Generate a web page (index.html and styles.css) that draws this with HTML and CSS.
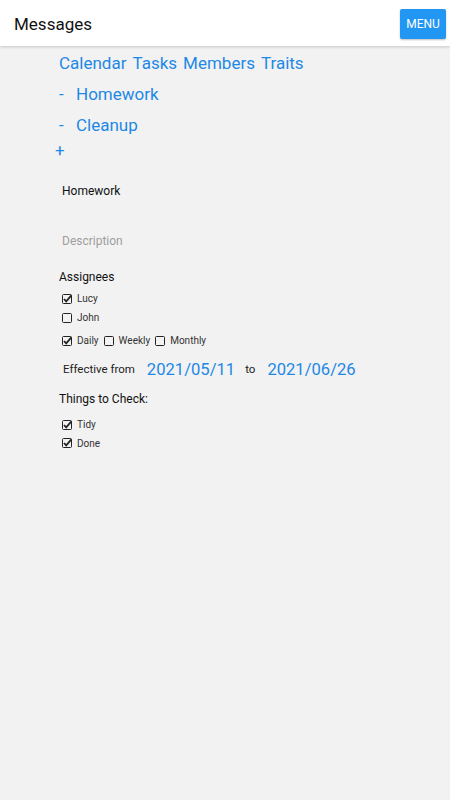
FILE: index.html
```html
<!DOCTYPE html>
<html lang="en">
<head>
    <meta charset="UTF-8">
    <meta name="viewport" content="width=device-width, initial-scale=1.0">
    <title>Messages</title>
    <link rel="stylesheet" href="styles.css">
</head>
<body>
    <header class="topbar">
        <span class="title">Messages</span>
        <button class="menu">MENU</button>
    </header>
    <main class="content">
        <ul class="tabs">
            <li><a href="#">Calendar</a></li>
            <li><a href="#">Tasks</a></li>
            <li><a href="#">Members</a></li>
            <li><a href="#">Traits</a></li>
        </ul>
        <ul class="tasklist">
            <li><span class="dash">-</span><a href="#">Homework</a></li>
            <li><span class="dash">-</span><a href="#">Cleanup</a></li>
        </ul>
        <div class="add">+</div>

        <div class="field name">Homework</div>
        <div class="field desc">Description</div>

        <div class="label">Assignees</div>
        <div class="checkrow first">
            <span class="check">
                <svg class="box" viewBox="0 0 10 10"><rect x="0.5" y="0.5" width="9" height="9" rx="1" fill="none" stroke="#222"/><path d="M2 5l2.2 2.4L9.4 1.4" fill="none" stroke="#222" stroke-width="1.8"/></svg>Lucy
            </span>
        </div>
        <div class="checkrow">
            <span class="check">
                <svg class="box" viewBox="0 0 10 10"><rect x="0.5" y="0.5" width="9" height="9" rx="1" fill="none" stroke="#222"/></svg>John
            </span>
        </div>
        <div class="checkrow freq">
            <span class="check">
                <svg class="box" viewBox="0 0 10 10"><rect x="0.5" y="0.5" width="9" height="9" rx="1" fill="none" stroke="#222"/><path d="M2 5l2.2 2.4L9.4 1.4" fill="none" stroke="#222" stroke-width="1.8"/></svg>Daily
            </span>
            <span class="check">
                <svg class="box" viewBox="0 0 10 10"><rect x="0.5" y="0.5" width="9" height="9" rx="1" fill="none" stroke="#222"/></svg>Weekly
            </span>
            <span class="check">
                <svg class="box" viewBox="0 0 10 10"><rect x="0.5" y="0.5" width="9" height="9" rx="1" fill="none" stroke="#222"/></svg>Monthly
            </span>
        </div>

        <div class="dates">
            <span class="small">Effective from</span>
            <a href="#" class="date">2021/05/11</a>
            <span class="small">to</span>
            <a href="#" class="date">2021/06/26</a>
        </div>

        <div class="label things">Things to Check:</div>
        <div class="checkrow first checklist">
            <span class="check">
                <svg class="box" viewBox="0 0 10 10"><rect x="0.5" y="0.5" width="9" height="9" rx="1" fill="none" stroke="#222"/><path d="M2 5l2.2 2.4L9.4 1.4" fill="none" stroke="#222" stroke-width="1.8"/></svg>Tidy
            </span>
        </div>
        <div class="checkrow tight">
            <span class="check">
                <svg class="box" viewBox="0 0 10 10"><rect x="0.5" y="0.5" width="9" height="9" rx="1" fill="none" stroke="#222"/><path d="M2 5l2.2 2.4L9.4 1.4" fill="none" stroke="#222" stroke-width="1.8"/></svg>Done
            </span>
        </div>
    </main>
</body>
</html>
```

FILE: styles.css
```css
*{
    margin: 0;
    padding: 0;
    box-sizing: border-box;
}
html, body{
    height: 100%;
}
body{
    font-family: Roboto, "Noto Sans", sans-serif;
    background-color: #f2f2f2;
    color: #222;
}
a{
    text-decoration: none;
    color: #1e88e5;
}
.topbar{
    height: 46px;
    background-color: #ffffff;
    display: flex;
    justify-content: space-between;
    align-items: center;
    padding: 0 4px 0 14px;
    box-shadow: 0 1px 3px rgba(0,0,0,0.18);
    position: relative;
}
.title{
    font-size: 17px;
    color: #111;
    margin-top: 2px;
}
.menu{
    width: 46px;
    height: 30px;
    border: none;
    border-radius: 2px;
    background-color: #2196f3;
    color: #ffffff;
    font-family: Roboto, sans-serif;
    font-size: 12px;
    box-shadow: 0 1px 2px rgba(0,0,0,0.25);
    margin-top: 1px;
}
.content{
    padding: 0 0 0 59px;
}
.tabs{
    display: flex;
    list-style-type: none;
    gap: 6px;
    font-size: 17px;
    height: 20px;
    line-height: 20px;
    margin-top: 7px;
}
.tasklist{
    list-style-type: none;
    font-size: 17px;
    margin-top: 11px;
}
.tasklist li{
    height: 31px;
    line-height: 20px;
    display: flex;
}
.dash{
    color: #1e88e5;
    width: 17px;
}
.add{
    color: #1e88e5;
    font-size: 17px;
    line-height: 20px;
    margin: -6px 0 0 -4px;
}
.field{
    font-size: 12px;
    line-height: 14px;
    padding-left: 3px;
}
.name{
    margin-top: 24px;
    color: #111;
}
.desc{
    margin-top: 36px;
    color: #9e9e9e;
}
.label{
    font-size: 12px;
    line-height: 14px;
    color: #111;
    margin-top: 22px;
}
.checkrow{
    display: flex;
    gap: 5px;
    height: 19px;
    align-items: center;
    padding-left: 3px;
    font-size: 10px;
    color: #333;
}
.first{
    margin-top: 5px;
}
.checklist{
    margin-top: 9px;
}
.tight{
    height: 18px;
}
.freq{
    margin-top: 4px;
}
.check{
    display: flex;
    align-items: center;
}
.box{
    width: 10px;
    height: 10px;
    margin-right: 5px;
}
.dates{
    display: flex;
    align-items: center;
    height: 20px;
    margin-top: 9px;
    padding-left: 4px;
}
.small{
    font-size: 11.5px;
    color: #222;
}
.date{
    font-size: 16.6px;
    margin: 0 10px 0 12px;
}
.date + .small + .date{
    margin-left: 12px;
}
.things{
    margin-top: 13px;
}
```
